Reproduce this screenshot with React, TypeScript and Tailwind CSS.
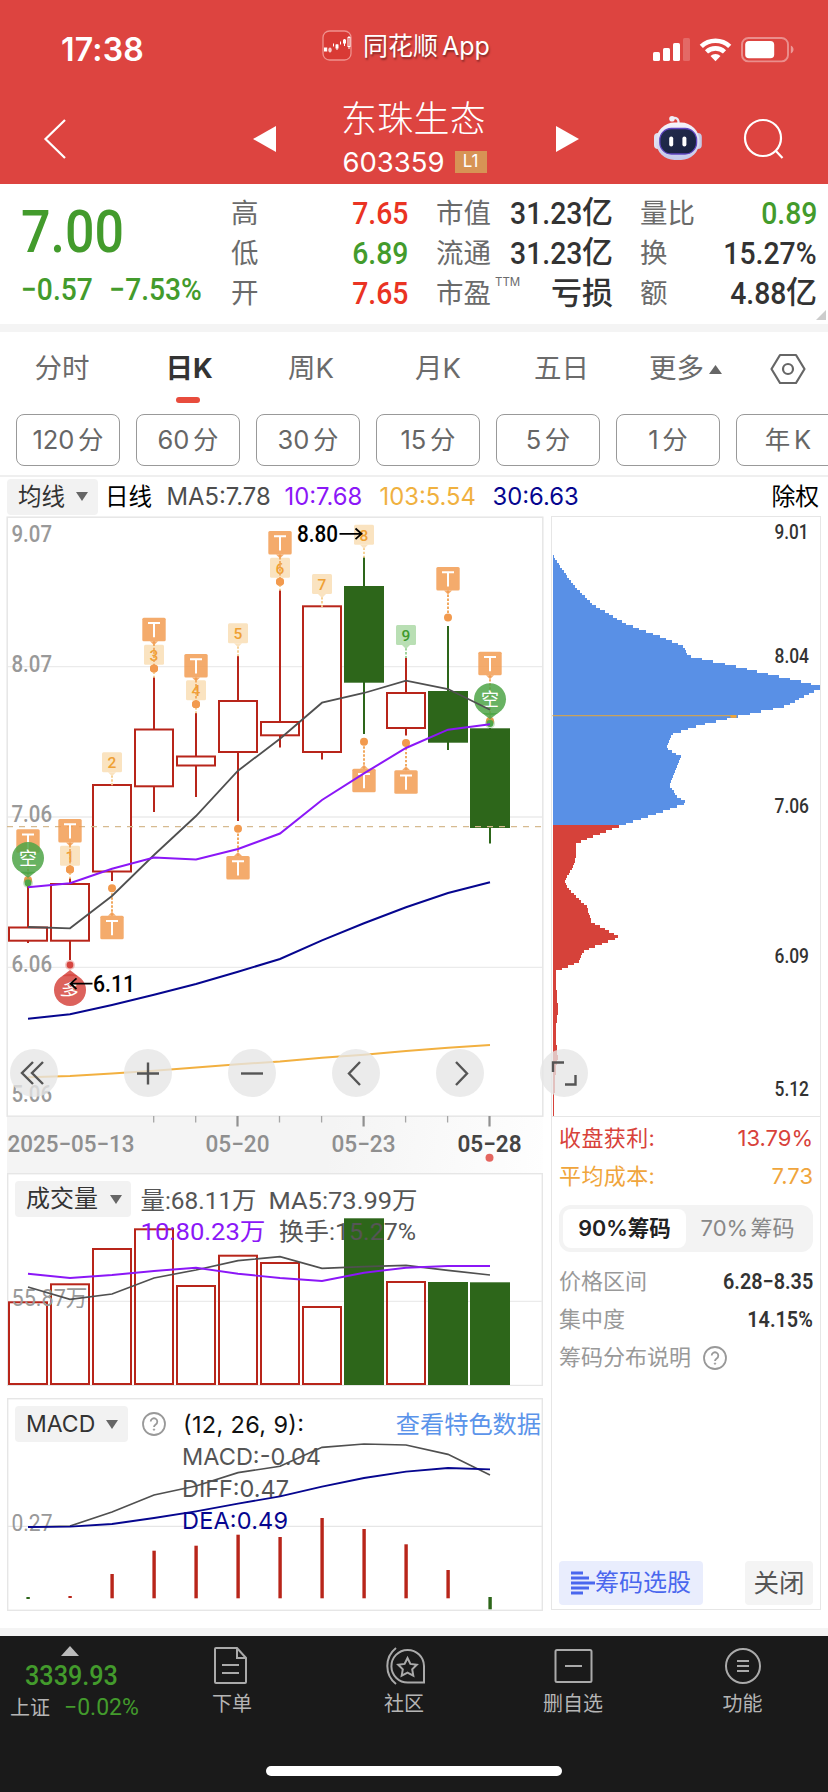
import React from "react";

const UP = "#b8251a";
const DOWN = "#2d661a";
const cx = (i: number) => 28 + i * 42;
const pts = (ys: number[]) => ys.map((y, i) => `${cx(i)},${y}`).join(" ");

const DIN = "font-['Roboto','Noto_Sans_CJK_SC',sans-serif]";

type LabelProps = {
  x: number;
  y: number;
  w?: number;
  size?: number;
  fill?: string;
  weight?: number;
  anchor?: "start" | "middle" | "end";
  children: string;
};

function Label({ x, y, w, size = 24, fill = "#999999", weight = 500, anchor = "start", children }: LabelProps) {
  return (
    <text
      x={x}
      y={y}
      fontSize={size}
      fill={fill}
      fontWeight={weight}
      textAnchor={anchor}
      textLength={w}
      lengthAdjust="spacingAndGlyphs"
      className={DIN}
    >
      {children}
    </text>
  );
}

/* ---------- candle data: body top, body bottom, wick top, wick bottom ---------- */
const candles: { t: number; b: number; hi: number; lo: number; up: boolean }[] = [
  { t: 926.5, b: 941.7, hi: 886, lo: 943, up: true },
  { t: 883, b: 941.7, hi: 878, lo: 960, up: true },
  { t: 784, b: 872.5, hi: 784, lo: 881, up: true },
  { t: 728.5, b: 787.3, hi: 677, lo: 812, up: true },
  { t: 755.5, b: 766.5, hi: 713, lo: 797, up: true },
  { t: 700, b: 753, hi: 656, lo: 821, up: true },
  { t: 721, b: 736.3, hi: 590, lo: 747.5, up: true },
  { t: 605.3, b: 753, hi: 605.3, lo: 759.5, up: true },
  { t: 586, b: 682.7, hi: 557, lo: 734, up: false },
  { t: 692, b: 729, hi: 657.7, lo: 735.5, up: true },
  { t: 691, b: 742.7, hi: 626, lo: 750, up: false },
  { t: 728.3, b: 828, hi: 728, lo: 843.5, up: false },
];

const ma5 = [927, 928.3, 896, 855, 816, 770.7, 738.7, 702.7, 693, 680.7, 689, 709.7];
const ma10 = [887.3, 883.3, 868.7, 857.5, 859.5, 849, 833.5, 800, 773.3, 748, 729.7, 724.3];
const ma30 = [1018.7, 1014.3, 1005, 994.8, 984, 971.7, 959, 940.3, 923.3, 907.3, 893, 882.3];
const ma103 = [1077.3, 1076, 1073.5, 1070.7, 1067.5, 1064.3, 1061.5, 1057.7, 1054.7, 1051, 1047.7, 1045];

const tAbove: [number, number, number][] = [
  [0, 829.3, 880],
  [1, 819, 869.5],
  [3, 617.7, 668.5],
  [4, 654, 704.3],
  [6, 531, 581.7],
  [10, 567, 617.5],
  [11, 651.7, 721],
];
const tBelow: [number, number, number][] = [
  [2, 915.7, 888.3],
  [5, 856, 828.7],
  [8, 768.7, 741.7],
  [9, 770.3, 743],
];
const counts: [number, string, number][] = [
  [1, "1", 845.7],
  [2, "2", 752.3],
  [3, "3", 644.7],
  [4, "4", 680.3],
  [5, "5", 623.3],
  [6, "6", 557.7],
  [7, "7", 574],
  [8, "8", 524.7],
  [9, "9", 625],
];

function TMark({ x, top, dot, below }: { x: number; top: number; dot: number; below?: boolean }) {
  const edge = below ? top : top + 23.5;
  const d = below ? -1 : 1;
  return (
    <g>
      <line x1={x} x2={x} y1={edge} y2={dot} stroke="#f0a050" strokeWidth={1.8} strokeDasharray="2.4 1.6" />
      <rect x={x - 11.7} y={top} width={23.4} height={23.5} rx={1.5} fill="#f29d54" fillOpacity={0.86} />
      <path d={`M${x - 4} ${edge}h8l-4 ${4 * d}z`} fill="#f29d54" fillOpacity={0.86} />
      <path d={`M${x - 6} ${top + 5.2}h12M${x} ${top + 5}v14.5`} stroke="#fff" strokeWidth={2} fill="none" />
      <circle cx={x} cy={dot} r={4} fill="#f29a4e" />
    </g>
  );
}

function CountMark({ x, top, n }: { x: number; top: number; n: string }) {
  const green = n === "9";
  const fill = green ? "#b9dfb4" : "#fae3c0";
  return (
    <g>
      <line x1={x} x2={x} y1={top + 23} y2={top + 33} stroke={green ? "#97cf92" : "#f6ce8d"} strokeWidth={1.8} strokeDasharray="2.4 1.6" />
      <rect x={x - 10} y={top} width={20} height={20} rx={1.5} fill={fill} />
      <path d={`M${x - 4} ${top + 20}h8l-4 4z`} fill={fill} />
      <Label x={x} y={top + 16} size={15.5} anchor="middle" weight={500} fill={green ? "#3f9a2c" : "#efa033"}>
        {n}
      </Label>
    </g>
  );
}

function Balloon({ x, y, text, color, up, dot }: { x: number; y: number; text: string; color: string; up?: boolean; dot: number }) {
  const d = up ? -1 : 1;
  return (
    <g>
      <circle cx={x} cy={dot} r={5} fill={color} fillOpacity={0.3} />
      <circle cx={x} cy={dot} r={3.4} fill={color} />
      <path d={`M${x - 8} ${y + 13.8 * d}L${x} ${y + 20 * d}L${x + 8} ${y + 13.8 * d}z`} fill={color} fillOpacity={0.85} />
      <circle cx={x} cy={y} r={16} fill={color} fillOpacity={0.85} />
      <g transform={up ? `rotate(15 ${x} ${y})` : undefined}>
        <Label x={x} y={y + 6.5} size={18} anchor="middle" weight={400} fill="#ffffff">
          {text}
        </Label>
      </g>
    </g>
  );
}

function PriceChart() {
  return (
    <svg width="570" height="600" viewBox="0 517 570 600" className="block overflow-visible">
      <rect x={7.2} y={517.2} width={535.6} height={599} fill="#fff" stroke="#e6e6e6" strokeWidth={1.5} />
      {[666.7, 817, 967.3].map((y) => (
        <line key={y} x1={8} x2={542} y1={y} y2={y} stroke="#ebebeb" strokeWidth={1.3} />
      ))}
      <Label x={11.5} y={541.5} w={40.5}>9.07</Label>
      <Label x={11.5} y={671.5} w={40.5}>8.07</Label>
      <Label x={11.5} y={821.5} w={40.5}>7.06</Label>
      <Label x={11.5} y={971.5} w={40.5}>6.06</Label>
      <Label x={11.5} y={1101.7} w={40.5}>5.06</Label>
      {candles.map((c, i) => (
        <g key={i}>
          <line x1={cx(i)} x2={cx(i)} y1={c.hi} y2={c.lo} stroke={c.up ? UP : DOWN} strokeWidth={2} />
          {c.up ? (
            <rect x={cx(i) - 19} y={c.t + 1} width={38} height={c.b - c.t - 2} fill="#fff" stroke={UP} strokeWidth={2} />
          ) : (
            <rect x={cx(i) - 20} y={c.t} width={40} height={c.b - c.t} fill={DOWN} />
          )}
        </g>
      ))}
      <line x1={7} x2={542} y1={826.6} y2={826.6} stroke="#d6ba90" strokeWidth={1.4} strokeDasharray="6 6" />
      {tAbove.map(([i, top, dot]) => (
        <TMark key={i} x={cx(i)} top={top} dot={dot} />
      ))}
      {tBelow.map(([i, top, dot]) => (
        <TMark key={i} x={cx(i)} top={top} dot={dot} below />
      ))}
      {counts.map(([i, n, top]) => (
        <CountMark key={n} x={cx(i)} top={top} n={n} />
      ))}
      {tAbove
        .filter(([i]) => [1, 3, 4, 6].includes(i))
        .map(([i, top, dot]) => (
          <g key={i}>
            <line x1={cx(i)} x2={cx(i)} y1={top + 26} y2={dot} stroke="#f0a050" strokeWidth={1.6} strokeDasharray="2.4 1.6" />
            <circle cx={cx(i)} cy={dot} r={4} fill="#f29a4e" />
          </g>
        ))}
      <Balloon x={28} y={858} dot={883} text="空" color="#4ea547" />
      <Balloon x={490} y={699.3} dot={723.5} text="空" color="#4ea547" />
      <Balloon x={70} y={990} dot={965} text="多" color="#d64640" up />
      <polyline points={pts(ma5)} fill="none" stroke="#505050" strokeWidth={1.8} />
      <polyline points={pts(ma10)} fill="none" stroke="#8b17f7" strokeWidth={2} />
      <polyline points={pts(ma30)} fill="none" stroke="#06068f" strokeWidth={2} />
      <polyline points={pts(ma103)} fill="none" stroke="#f2b040" strokeWidth={2} />
      <Label x={297} y={542.3} w={41} fill="#000">8.80</Label>
      <path d="M339.5 533.8H361M355.5 528.5l6 5.3-6 5.3" stroke="#000" strokeWidth={1.8} fill="none" />
      <Label x={93} y={992.3} w={42} fill="#000">6.11</Label>
      <path d="M92.5 983.7H71M76.5 978.4l-6 5.3 6 5.3" stroke="#000" strokeWidth={1.8} fill="none" />
    </svg>
  );
}

const profile: [number, number][] = [
  [552, 555], [572.3, 584], [591.7, 604], [625, 623.6], [670, 640.3], [684.3, 647.3], [687, 655.5],
  [736, 666.4], [824, 686.8], [806.7, 694.4], [786, 705.7], [741.7, 715.4], [699.3, 725], [671.7, 734],
  [666, 748], [680.7, 756.6], [669, 784.7], [676, 796], [687, 802.5], [661.7, 811.5], [618.7, 826],
  [575, 843.4], [575.7, 855.5], [572.7, 866.4], [564, 880.4], [567.3, 888], [586.7, 906.8], [591, 921.6],
  [619, 936.8], [583.3, 950.8], [578.3, 962], [555, 971.4], [556.3, 996], [557.7, 1010], [555, 1029.4],
  [556.3, 1049], [557.5, 1058], [555.3, 1070], [554, 1093.5], [552.7, 1117],
];

function widthAt(y: number) {
  for (let i = 1; i < profile.length; i++) {
    const [x0, y0] = profile[i - 1];
    const [x1, y1] = profile[i];
    if (y <= y1) return Math.max(0, x0 + ((x1 - x0) * (y - y0)) / (y1 - y0) - 552);
  }
  return 0;
}

const STEP = 2.5;
const rows = Array.from({ length: 225 }, (_, i) => 555 + i * STEP).filter((y) => y < 1116);

function ChipChart() {
  return (
    <svg width="269" height="599" viewBox="551.5 517 269 599" className="block">
      <g shapeRendering="crispEdges">
        {rows.map((y) => (
          <rect
            key={y}
            x={552}
            y={y}
            width={Math.max(1, Math.min(widthAt(y + STEP / 2), 267.5))}
            height={STEP}
            fill={y < 824.5 ? "#5990e6" : "#d6423a"}
          />
        ))}
      </g>
      <path d="M552 715.6h184" stroke="#c9a25c" strokeWidth={1.2} />
      <path d="M730 716.6h6" stroke="#f5a531" strokeWidth={2.4} />
      <Label x={774} y={539} w={34} size={20} fill="#333">9.01</Label>
      <Label x={774} y={663} w={34.5} size={20} fill="#333">8.04</Label>
      <Label x={774} y={813.3} w={34.5} size={20} fill="#333">7.06</Label>
      <Label x={774} y={963.3} w={34.5} size={20} fill="#333">6.09</Label>
      <Label x={774} y={1095.5} w={34.5} size={20} fill="#333">5.12</Label>
    </svg>
  );
}

function TimeAxis() {
  return (
    <svg width="536" height="57" viewBox="7 1116.5 536 57" className="block">
      <path d="M153.7 1116.5v6.5M195.7 1116.5v6.5M279.5 1116.5v6.5M321.6 1116.5v6.5M405.6 1116.5v6.5M447.6 1116.5v6.5" stroke="#a6a6a6" strokeWidth={1.3} />
      <path d="M237.5 1116.5v10.5M363.6 1116.5v10.5M489.5 1116.5v10.5" stroke="#909090" strokeWidth={2.2} />
      <Label x={7.5} y={1152.3} w={127} fill="#8f8f8f">2025−05−13</Label>
      <Label x={205.5} y={1152.3} w={64} fill="#8f8f8f">05−20</Label>
      <Label x={331.5} y={1152.3} w={64} fill="#8f8f8f">05−23</Label>
      <Label x={457.5} y={1152.3} w={64} fill="#444" weight={600}>05−28</Label>
      <circle cx={489.5} cy={1158.3} r={4} fill="#e4655f" />
    </svg>
  );
}

const vol = [1301.3, 1283.3, 1248, 1228.3, 1285, 1254.7, 1262, 1306, 1218.3, 1281, 1282, 1282.3];
const volMa5 = [1287, 1299.3, 1294, 1278, 1270, 1260.7, 1256.7, 1268.3, 1266.7, 1265.3, 1270.3, 1275];
const volMa10 = [1273.7, 1278, 1275, 1271, 1267.7, 1273.7, 1278, 1281, 1272.7, 1267.7, 1266, 1266];

function VolumeChart() {
  return (
    <svg width="536" height="213" viewBox="7 1173 536 213" className="block">
      <rect x={7.7} y={1173.7} width={534.6} height={211.8} fill="#fff" stroke="#e6e6e6" strokeWidth={1.4} />
      <line x1={8} x2={542} y1={1301.3} y2={1301.3} stroke="#ebebeb" strokeWidth={1.3} />
      <Label x={140.5} y={1208.7} w={116} weight={400} fill="#555">量:68.11万</Label>
      <Label x={268.5} y={1208.7} w={149} weight={400} fill="#555">MA5:73.99万</Label>
      {vol.map((y, i) =>
        candles[i].up ? (
          <rect key={i} x={cx(i) - 19} y={y + 1} width={38} height={1384 - y - 1} fill="none" stroke={UP} strokeWidth={2} />
        ) : (
          <rect key={i} x={cx(i) - 20} y={y} width={40} height={1385 - y} fill={DOWN} />
        )
      )}
      <Label x={140.5} y={1240.2} w={125} weight={400} fill="#8b17f7">10:80.23万</Label>
      <Label x={279} y={1240.2} w={137} weight={400} fill="#555">换手:15.27%</Label>
      <Label x={11.5} y={1305.5} w={76} size={23} weight={400}>55.87万</Label>
      <polyline points={pts(volMa5)} fill="none" stroke="#505050" strokeWidth={1.7} />
      <polyline points={pts(volMa10)} fill="none" stroke="#8b17f7" strokeWidth={1.9} />
    </svg>
  );
}

const bars: [number, number][] = [
  [1597, 1599], [1596, 1598], [1574, 1598.3], [1550.7, 1598.3], [1545.7, 1598.3], [1534.7, 1598.3],
  [1537, 1598.3], [1518, 1598.3], [1529, 1598.3], [1544.3, 1598.3], [1570, 1598.3], [1597, 1609.3],
];
const diff = [1527, 1526, 1512, 1495, 1486, 1472.7, 1466.3, 1447.3, 1444, 1445, 1454.3, 1475];
const dea = [1527, 1526.7, 1524, 1518, 1511.3, 1503.7, 1496.3, 1486.7, 1478, 1471.7, 1468, 1469.3];

function MacdChart() {
  return (
    <svg width="536" height="213" viewBox="7 1398 536 213" className="block">
      <rect x={7.7} y={1398.7} width={534.6} height={211.6} fill="#fff" stroke="#e6e6e6" strokeWidth={1.4} />
      <line x1={8} x2={542} y1={1526.3} y2={1526.3} stroke="#e6e6e6" strokeWidth={1.3} />
      <Label x={11.5} y={1530.5} w={41} size={23} weight={400}>0.27</Label>
      {bars.map(([a, b], i) => (
        <rect key={i} x={cx(i) - 1.6} y={a} width={3.4} height={b - a} fill={i === 0 || i === 11 ? DOWN : UP} />
      ))}
      <g className="font-['Inter',sans-serif]" fontSize={23.5}>
        <text x={183} y={1433.3} textLength={121} fill="#111">(12, 26, 9):</text>
        <text x={182} y={1465.3} textLength={139} fill="#555">MACD:-0.04</text>
        <text x={182} y={1497} textLength={107} fill="#555">DIFF:0.47</text>
        <text x={182} y={1529} textLength={106} fill="#06068f">DEA:0.49</text>
      </g>
      <polyline points={pts(diff)} fill="none" stroke="#505050" strokeWidth={1.7} />
      <polyline points={pts(dea)} fill="none" stroke="#06068f" strokeWidth={1.8} />
    </svg>
  );
}

function HelpIcon({ className = "" }: { className?: string }) {
  return (
    <svg width="26" height="26" viewBox="0 0 26 26" className={className} fill="none" stroke="#999" strokeWidth="1.8">
      <circle cx="13" cy="13" r="11" />
      <path d="M9.7 10.6a3.3 3.3 0 1 1 5 2.8c-1.2.8-1.7 1.3-1.7 2.6" />
      <circle cx="13" cy="18.6" r=".7" fill="#999" strokeWidth="1" />
    </svg>
  );
}

function Caret({ className = "" }: { className?: string }) {
  return (
    <svg width="12" height="9" viewBox="0 0 12 9" className={className}>
      <path d="M0 0h12L6 9z" fill="#666" />
    </svg>
  );
}

function AppLogo() {
  return (
    <svg width="30" height="31" viewBox="0 0 30 31">
      <rect x="1" y="1" width="28" height="29" rx="6.5" fill="#d93a35" stroke="#ef918d" strokeWidth="1.3" />
      <g stroke="#fff" strokeWidth="1" fill="#fff">
        <path d="M8 17.500v5M11.500 13.500v3M15 14v6M18.500 11.500v3M22.500 9v7M27 6v13" />
        <rect x="2.500" y="18" width="2.200" height="3" />
        <rect x="7" y="19" width="2" height="2" fill="#d93a35" />
        <rect x="14" y="15" width="2" height="3" />
        <rect x="21.500" y="10" width="2" height="3" />
        <rect x="26" y="7.500" width="2" height="9" fill="#d93a35" />
      </g>
    </svg>
  );
}

function StatusIcons() {
  return (
    <svg width="146" height="30" viewBox="650 35 146 30">
      <rect x="653" y="52" width="7" height="9" rx="1.6" fill="#fff" />
      <rect x="663" y="48" width="7" height="13" rx="1.6" fill="#fff" />
      <rect x="673" y="43" width="7" height="18" rx="1.6" fill="#fff" />
      <rect x="683" y="38" width="7" height="23" rx="1.6" fill="#fff" fillOpacity=".2" />
      <g fill="none" stroke="#fff" strokeWidth="4.6">
        <path d="M701.3 46.4a20.500 20.500 0 0 1 28.400 0" />
        <path d="M706.5 51.900a13.300 13.300 0 0 1 18 0" />
      </g>
      <path d="M715.5 61.200l-5-5.200a7.200 7.200 0 0 1 10 0z" fill="#fff" />
      <rect x="742" y="38" width="46" height="23.400" rx="6.500" fill="none" stroke="#fff" strokeOpacity=".4" strokeWidth="1.9" />
      <rect x="745.2" y="41" width="29" height="17.200" rx="3.800" fill="#fff" />
      <path d="M790.8 45.500c3.600 1.500 3.600 6.500 0 8z" fill="#fff" fillOpacity=".45" />
    </svg>
  );
}

function Robot() {
  return (
    <svg width="52" height="48" viewBox="652 114 52 48">
      <defs>
        <linearGradient id="shell" x1="0" y1="0" x2="0" y2="1">
          <stop offset="0" stopColor="#f6f3fa" />
          <stop offset="1" stopColor="#c3c8ea" />
        </linearGradient>
        <linearGradient id="face" x1="0" y1="0" x2="1" y2="1">
          <stop offset="0" stopColor="#232c4d" />
          <stop offset="1" stopColor="#182040" />
        </linearGradient>
      </defs>
      <path d="M672 118.500c4-2 7 .5 6.500 5" fill="none" stroke="#e9e9f4" strokeWidth="2.2" />
      <circle cx="672" cy="118.800" r="2.800" fill="#f0edf7" />
      <rect x="654" y="133" width="8" height="16" rx="4" fill="#dfe0f1" />
      <rect x="693.8" y="133" width="8" height="16" rx="4" fill="#c7c9e6" />
      <rect x="656" y="122.500" width="43.500" height="37.500" rx="18.500" fill="url(#shell)" />
      <rect x="659.800" y="128.500" width="36.800" height="25.500" rx="11.500" fill="url(#face)" stroke="#5f45c0" strokeWidth="1.300" />
      <rect x="669.2" y="136.500" width="4" height="10" rx="2" fill="#fff" />
      <rect x="682.4" y="136.500" width="4" height="10" rx="2" fill="#fff" />
    </svg>
  );
}

function Header() {
  return (
    <header className="h-[184px] bg-[#dd4440] text-white">
      <div className="flex h-[92px] items-start">
        <div className="ml-[61px] mt-[30px] w-[261px] font-['Inter',sans-serif] text-[32px] font-semibold leading-10 tracking-[0.2px]">17:38</div>
        <div className="mt-[30px] flex w-[328px] items-center gap-[11px]">
          <AppLogo />
          <span className="whitespace-nowrap font-['Inter','Noto_Sans_CJK_SC',sans-serif] text-[25px] leading-[30px] [text-shadow:1px_2px_2px_rgba(0,0,0,0.4)]">
            同花顺<span className="ml-[4px]">App</span>
          </span>
        </div>
        <div className="mt-[35px]"><StatusIcons /></div>
      </div>
      <div className="flex h-[92px] items-start">
        <svg width="24" height="42" viewBox="0 0 24 42" className="ml-[43px] mt-[26px]" fill="none" stroke="#fff" strokeWidth="2.2">
          <path d="M22 2L2.500 21 22 40" />
        </svg>
        <svg width="24" height="26" viewBox="0 0 24 26" className="ml-[186px] mt-[34px]"><path d="M0 13L23 0v26z" fill="#fff" /></svg>
        <div className="ml-[50px] flex w-[175px] flex-col items-center">
          <div className="mt-[2px] whitespace-nowrap pr-[2px] font-['Noto_Sans_CJK_SC',sans-serif] text-[36px] font-light leading-[44px] tracking-[0.3px]">东珠生态</div>
          <div className="mt-[12px] flex items-center">
            <span className="font-['Inter',sans-serif] text-[27.500px] leading-[24px]">603359</span>
            <span className="ml-[10px] flex h-[22px] w-8 items-center justify-center bg-[#d79355] font-['Inter',sans-serif] text-[17px]">L1</span>
          </div>
        </div>
        <svg width="24" height="26" viewBox="0 0 24 26" className="ml-[54px] mt-[34px]"><path d="M23 13L0 0v26z" fill="#fff" /></svg>
        <div className="ml-[72px] mt-[22px]"><Robot /></div>
        <svg width="44" height="44" viewBox="742 117 44 44" className="ml-[38px] mt-[25px]" fill="none" stroke="#fff" strokeWidth="2.2">
          <circle cx="763" cy="138" r="18" />
          <path d="M775.500 150.500l7 7.500" />
        </svg>
      </div>
    </header>
  );
}

function Stat({ label, sup, value, unit, tone }: { label: string; sup?: string; value?: string; unit?: string; tone: string }) {
  return (
    <div className="flex h-10 items-center justify-between">
      <span className="flex whitespace-nowrap text-[27.500px] text-[#6b6b6b]">
        {label}
        {sup && <sup className="top-0 ml-[4px] mt-[2px] font-['Inter',sans-serif] text-[11.500px] leading-[14px]">{sup}</sup>}
      </span>
      <span className={`flex whitespace-nowrap text-[31.500px] font-medium ${tone}`}>
        {value && <span className="origin-right scale-x-[0.9]">{value}</span>}
        {unit && <span className="text-[31px]">{unit}</span>}
      </span>
    </div>
  );
}

function Quote() {
  const red = "text-[#ea3323]";
  const green = "text-[#439b2c]";
  const dark = "text-[#333]";
  return (
    <section className={`flex h-[140px] pt-[10px] ${DIN}`}>
      <div className={`ml-[21px] w-[209px] ${green}`}>
        <div className="mt-[8px] origin-left scale-x-[0.88] text-[59px] font-medium leading-[60px]">7.00</div>
        <div className="mt-[8px] flex origin-left scale-x-[0.91] whitespace-nowrap text-[31px] font-medium leading-10">
          <span className="w-[97px]">−0.57</span>
          <span>−7.53%</span>
        </div>
      </div>
      <div className="ml-px w-[177px]">
        <Stat label="高" value="7.65" tone={red} />
        <Stat label="低" value="6.89" tone={green} />
        <Stat label="开" value="7.65" tone={red} />
      </div>
      <div className="ml-[28px] w-[177px]">
        <Stat label="市值" value="31.23" unit="亿" tone={dark} />
        <Stat label="流通" value="31.23" unit="亿" tone={dark} />
        <Stat label="市盈" sup="TTM" unit="亏损" tone={dark} />
      </div>
      <div className="ml-[27px] w-[177px]">
        <Stat label="量比" value="0.89" tone={green} />
        <Stat label="换" value="15.27%" tone={dark} />
        <Stat label="额" value="4.88" unit="亿" tone={dark} />
      </div>
      <svg width="10" height="10" viewBox="0 0 10 10" className="-ml-px mb-[4px] self-end"><path d="M10 0v10H0z" fill="#ccc" /></svg>
    </section>
  );
}

function Tabs() {
  return (
    <nav className="flex h-[74px] items-center text-[27.500px] text-[#6b6b6b]">
      <span className="ml-[34.500px] w-[131px]">分时</span>
      <span className="relative w-[122.500px] font-bold text-[#333]">
        日K
        <i className="absolute left-[10px] top-[49px] h-[6px] w-6 rounded-[3px] bg-[#e84c3d]" />
      </span>
      <span className="w-[127px]">周K</span>
      <span className="w-[119px]">月K</span>
      <span className="w-[115px]">五日</span>
      <span className="w-[60px]">更多</span>
      <svg width="14" height="9" viewBox="0 0 14 9"><path d="M6.500 0L13 9H0z" fill="#666" /></svg>
      <svg width="36" height="32" viewBox="0 0 36 32" className="ml-[47px]" fill="none" stroke="#666" strokeWidth="2.200" strokeLinejoin="round">
        <path d="M10 2h16l8.500 14L26 30H10L1.500 16z" />
        <circle cx="18" cy="16" r="5" />
      </svg>
    </nav>
  );
}

function Periods() {
  return (
    <div className="flex h-[71px] gap-4 overflow-hidden border-b-2 border-[#efefef] pl-4 pt-2">
      {["120 分", "60 分", "30 分", "15 分", "5 分", "1 分", "年 K"].map((p) => (
        <div key={p} className="flex h-[52px] w-[104px] shrink-0 items-center justify-center rounded-lg border border-[#999] text-[25.500px] text-[#666] [word-spacing:-3.500px]">
          {p}
        </div>
      ))}
    </div>
  );
}

function Legend() {
  return (
    <div className="flex h-[39px] items-center whitespace-nowrap text-[23.800px]">
      <div className="ml-[7px] flex h-9 w-[91px] items-center rounded bg-[#f2f2f2] pl-[11px] text-[23.500px] text-[#333]">
        均线<Caret className="ml-[11px]" />
      </div>
      <span className="ml-[7px] w-[61.500px] text-[23.500px] text-black">日线</span>
      <span className="w-[118px] text-[#4d4d4d]">MA5:7.78</span>
      <span className="w-[95px] text-[#8b17f7]">10:7.68</span>
      <span className="w-[113px] text-[#f0b13f]">103:5.54</span>
      <span className="w-[279px] text-[#06068f]">30:6.63</span>
      <span className="text-black">除权</span>
    </div>
  );
}

const toolButtons: { d: string; left: string }[] = [
  { left: "left-[10px]", d: "M23 13L12 24l11 11M33 13L22 24l11 11" },
  { left: "left-[124px]", d: "M13 24.500h22M24 13.500v22" },
  { left: "left-[228px]", d: "M13 24.500h22" },
  { left: "left-[332px]", d: "M28 13L17 24.500 28 36" },
  { left: "left-[436px]", d: "M20 13l11 11.500L20 36" },
  { left: "left-[540px]", d: "M13 23v-9.500h11M25 35.500h10.500V26" },
];

function ChipPanel() {
  return (
    <aside className="mt-[-1px] flex h-[1094px] w-[270px] flex-col border-[1.500px] border-[#e6e6e6]">
      <div className="h-[600px] overflow-hidden border-b border-[#e6e6e6]"><ChipChart /></div>
      <div className="flex flex-1 flex-col pb-[4px] pl-[7px] pr-[7px] text-[22px]">
        <div className="mt-[2px] flex h-[38px] items-center justify-between text-[#d8423a]"><span className="tracking-[0.400px]">收盘获利:</span><span>13.79%</span></div>
        <div className="flex h-[38px] items-center justify-between text-[#f0a53c]"><span className="tracking-[0.400px]">平均成本:</span><span>7.73</span></div>
        <div className="mt-[10px] flex h-[47px] rounded-xl bg-[#f3f3f3] p-[4px]">
          <div className="flex w-[123px] items-center justify-center rounded-lg bg-white text-[21.500px] font-semibold text-[#222]">90%筹码</div>
          <div className="flex flex-1 items-center justify-center text-[#888] [word-spacing:-4px]">70% 筹码</div>
        </div>
        <div className="mt-[10px] flex h-[38px] items-center justify-between text-[#999]">
          <span>价格区间</span>
          <span className={`origin-right scale-x-[0.9] font-semibold text-[#333] ${DIN}`}>6.28−8.35</span>
        </div>
        <div className="flex h-[38px] items-center justify-between text-[#999]">
          <span>集中度</span>
          <span className={`origin-right scale-x-[0.9] font-semibold text-[#333] ${DIN}`}>14.15%</span>
        </div>
        <div className="flex h-[39px] items-center text-[#999]">筹码分布说明<HelpIcon className="ml-[11px]" /></div>
        <div className="mt-auto flex h-11 justify-between">
          <div className="flex w-[144px] items-center rounded bg-[#e9edfd] pl-[12px] text-[24px] text-[#4a67ee]">
            <svg width="24" height="24" viewBox="0 0 24 24" className="shrink-0" stroke="#4a67ee" strokeWidth="2.800">
              <path d="M0 2h12M0 7h18M0 12h24M0 17h18M0 22h12" />
            </svg>
            <span className="whitespace-nowrap">筹码选股</span>
          </div>
          <div className="flex w-[68px] items-center justify-center rounded bg-[#f4f4f4] text-[25.500px] text-[#555]">关闭</div>
        </div>
      </div>
    </aside>
  );
}

function Charts() {
  return (
    <main className="relative flex h-[1112px] pt-px">
      <div className="w-[551px]">
        <div className="h-[599px] w-[551px]"><PriceChart /></div>
        <div className="ml-[7px] h-[57px] w-[536px] bg-[linear-gradient(100deg,#f4f4f4_60%,#fefefe_100%)]"><TimeAxis /></div>
        <div className="relative ml-[7px] h-[213px] w-[536px]">
          <VolumeChart />
          <div className="absolute left-[8px] top-[8px] flex h-9 w-[116px] items-center rounded bg-[#f2f2f2] pl-[11px] text-[24px] text-[#333]">
            成交量<Caret className="ml-[12px]" />
          </div>
        </div>
        <div className="relative ml-[7px] mt-[12px] h-[213px] w-[536px]">
          <MacdChart />
          <div className="absolute left-[8px] right-0 top-[8px] flex h-9 items-center">
            <div className="flex h-9 w-[113px] items-center rounded bg-[#f2f2f2] pl-[11px] text-[23px] text-[#333]">
              MACD<Caret className="ml-[11px]" />
            </div>
            <HelpIcon className="ml-[13px]" />
            <span className="ml-auto mr-[2px] mt-[2px] text-[24.200px] text-[#5b94ea]">查看特色数据</span>
          </div>
        </div>
      </div>
      <ChipPanel />
      {toolButtons.map((b) => (
        <svg key={b.left} width="48" height="48" viewBox="0 0 48 48" className={`absolute top-[533px] ${b.left}`} fill="none">
          <circle cx="24" cy="24" r="24" fill="#e6e6e6" fillOpacity="0.78" />
          <path d={b.d} stroke="#555" strokeWidth="2.400" />
        </svg>
      ))}
    </main>
  );
}

function NavItem({ label, ml, children }: { label: string; ml: string; children: React.ReactNode }) {
  return (
    <div className={`flex w-[60px] flex-col items-center ${ml}`}>
      <svg width="44" height="40" viewBox="0 0 44 40" className="mt-[10px]" fill="none" stroke="#aaa" strokeWidth="2">
        {children}
      </svg>
      <span className="mt-[5px] whitespace-nowrap text-[20px] leading-[26px] text-[#b5b5b5]">{label}</span>
    </div>
  );
}

function BottomBar() {
  return (
    <footer className="h-[156px] bg-[#1a1a1a]">
      <div className="flex h-[130px]">
        <div className={`w-[140px] text-[#439b2c] ${DIN}`}>
          <svg width="18" height="10" viewBox="0 0 18 10" className="ml-[61px] mt-[10px]"><path d="M9 0l9 10H0z" fill="#bbb" /></svg>
          <div className="ml-[24.500px] mt-[6px] origin-left scale-x-[0.9] text-[28px] font-medium leading-[28px]">3339.93</div>
          <div className="mt-[3px] flex h-[30px] items-center">
            <span className="ml-[10px] text-[20px] text-[#b5b5b5]">上证</span>
            <span className="ml-[14px] text-[23px]">−0.02%</span>
          </div>
        </div>
        <NavItem label="下单" ml="ml-[62px]">
          <path d="M6 2h21l9 10v24a1 1 0 0 1-1 1H6a1 1 0 0 1-1-1V3a1 1 0 0 1 1-1zM27 2v10h9M12 19h17M12 27h17" />
        </NavItem>
        <NavItem label="社区" ml="ml-[112px]">
          <path d="M14 2a23 23 0 0 0 0 36" />
          <path d="M42 36.500H26A16.300 16.300 0 1 1 42 20z" />
          <path d="M25.500 12l2.900 5.900 6.400.9-4.600 4.500 1.100 6.400-5.800-3-5.800 3 1.100-6.400-4.600-4.500 6.400-.9z" />
        </NavItem>
        <NavItem label="删自选" ml="ml-[109px]">
          <rect x="4.500" y="4" width="36" height="32" rx="1.500" />
          <path d="M14 20h17" />
        </NavItem>
        <NavItem label="功能" ml="ml-[109.500px]">
          <circle cx="22" cy="20" r="17" />
          <path d="M16 15h12M16 20h12M16 25h12" />
        </NavItem>
      </div>
      <div className="mx-auto h-[10px] w-[296px] rounded-full bg-white" />
    </footer>
  );
}

export default function App() {
  return (
    <div className="h-[1792px] w-[828px] overflow-hidden bg-white font-['Inter','Noto_Sans_CJK_SC',sans-serif]">
      <Header />
      <Quote />
      <div className="h-2 bg-[#f4f4f4]" />
      <Tabs />
      <Periods />
      <Legend />
      <Charts />
      <div className="h-2 bg-[#f4f4f4]" />
      <BottomBar />
    </div>
  );
}
